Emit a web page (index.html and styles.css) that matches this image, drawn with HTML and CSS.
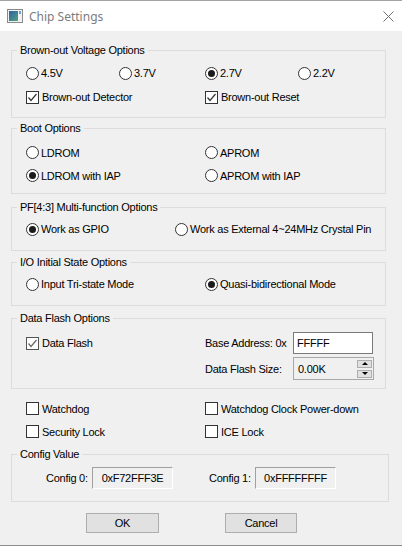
FILE: index.html
```html
<!DOCTYPE html>
<html lang="en">
<head>
  <meta charset="UTF-8">
  <title>Chip Settings</title>
  <link rel="stylesheet" href="styles.css">
</head>
<body>
  <div class="dialog">
    <!-- Barre de titre -->
    <div class="titlebar">
      <svg class="app-icon" width="16" height="14" viewBox="0 0 16 14">
        <defs>
          <linearGradient id="ico" x1="0" y1="0" x2="1" y2="1">
            <stop offset="0" stop-color="#2f5fa8"/>
            <stop offset="1" stop-color="#4fa57a"/>
          </linearGradient>
        </defs>
        <rect x="0.5" y="0.5" width="15" height="13" fill="#f2f2f2" stroke="#8a8a8a"/>
        <rect x="2" y="2" width="9" height="10" fill="url(#ico)"/>
        <rect x="12" y="2" width="2" height="3" fill="#6f9fd6"/>
      </svg>
      <span class="title">Chip Settings</span>
      <svg class="close" width="11" height="11" viewBox="0 0 11 11">
        <path d="M0.5 0.5 L10.5 10.5 M10.5 0.5 L0.5 10.5" stroke="#707070" stroke-width="1" fill="none"/>
      </svg>
    </div>

    <div class="content">
      <!-- Brown-out -->
      <fieldset class="group">
        <legend>Brown-out Voltage Options</legend>
        <div class="row cols4">
          <label class="opt"><span class="radio"></span>4.5V</label>
          <label class="opt"><span class="radio"></span>3.7V</label>
          <label class="opt"><span class="radio on"></span>2.7V</label>
          <label class="opt"><span class="radio"></span>2.2V</label>
        </div>
        <div class="row">
          <label class="opt"><span class="check"><svg width="11" height="11" viewBox="0 0 11 11"><path d="M1.5 5.5 L4 8.5 L9.5 2" /></svg></span>Brown-out Detector</label>
          <label class="opt"><span class="check"><svg width="11" height="11" viewBox="0 0 11 11"><path d="M1.5 5.5 L4 8.5 L9.5 2" /></svg></span>Brown-out Reset</label>
        </div>
      </fieldset>

      <!-- Boot -->
      <fieldset class="group boot">
        <legend>Boot Options</legend>
        <div class="row">
          <label class="opt"><span class="radio"></span>LDROM</label>
          <label class="opt"><span class="radio"></span>APROM</label>
        </div>
        <div class="row">
          <label class="opt"><span class="radio on"></span>LDROM with IAP</label>
          <label class="opt"><span class="radio"></span>APROM with IAP</label>
        </div>
      </fieldset>

      <!-- PF[4:3] -->
      <fieldset class="group pf">
        <legend>PF[4:3] Multi-function Options</legend>
        <div class="row pf-cols">
          <label class="opt"><span class="radio on"></span>Work as GPIO</label>
          <label class="opt"><span class="radio"></span>Work as External 4~24MHz Crystal Pin</label>
        </div>
      </fieldset>

      <!-- I/O -->
      <fieldset class="group io">
        <legend>I/O Initial State Options</legend>
        <div class="row">
          <label class="opt"><span class="radio"></span>Input Tri-state Mode</label>
          <label class="opt"><span class="radio on"></span>Quasi-bidirectional Mode</label>
        </div>
      </fieldset>

      <!-- Data Flash -->
      <fieldset class="group flash">
        <legend>Data Flash Options</legend>
        <div class="flash-grid">
          <label class="opt"><span class="check dim"><svg width="11" height="11" viewBox="0 0 11 11"><path d="M1.5 5.5 L4 8.5 L9.5 2" /></svg></span>Data Flash</label>
          <span>Base Address: 0x</span>
          <input class="field" type="text" value="FFFFF">
          <span></span>
          <span>Data Flash Size:</span>
          <div class="spin">
            <span>0.00K</span>
            <div class="spin-btns">
              <span class="spin-btn"><i class="tri-up"></i></span>
              <span class="spin-btn"><i class="tri-down"></i></span>
            </div>
          </div>
        </div>
      </fieldset>

      <!-- Options libres -->
      <div class="loose">
        <div class="row">
          <label class="opt"><span class="check"></span>Watchdog</label>
          <label class="opt"><span class="check"></span>Watchdog Clock Power-down</label>
        </div>
        <div class="row">
          <label class="opt"><span class="check"></span>Security Lock</label>
          <label class="opt"><span class="check"></span>ICE Lock</label>
        </div>
      </div>

      <!-- Config -->
      <fieldset class="group config">
        <legend>Config Value</legend>
        <div class="cfg-row">
          <div class="cfg"><span class="cfg-label">Config 0:</span><span class="cfg-value">0xF72FFF3E</span></div>
          <div class="cfg"><span class="cfg-label">Config 1:</span><span class="cfg-value">0xFFFFFFFF</span></div>
        </div>
      </fieldset>

      <div class="buttons">
        <button class="btn">OK</button>
        <button class="btn cancel">Cancel</button>
      </div>
    </div>
  </div>
</body>
</html>
```

FILE: styles.css
```css
* {
  box-sizing: border-box;
}
body {
  margin: 0;
  background: #f0f0f0;
  font-family: "Liberation Sans", Arial, sans-serif;
  font-size: 11px;
  letter-spacing: -0.25px;
  color: #000;
}
.dialog {
  width: 402px;
  height: 546px;
  display: flex;
  flex-direction: column;
  background: #f0f0f0;
  border-top: 1px solid #a3a3a3;
  border-bottom: 1px solid #8c8c8c;
}
.titlebar {
  height: 30px;
  flex: none;
  display: flex;
  align-items: center;
  padding: 0 8px 0 7px;
  background: #fff;
}
.app-icon {
  margin-top: -1px;
}
.title {
  margin-left: 6px;
  font-family: "Noto Sans", "Open Sans", sans-serif;
  font-size: 12px;
  letter-spacing: 0;
  color: #7c7c7c;
}
.close {
  margin-left: auto;
  margin-top: 1px;
}
.content {
  padding: 7px 16px 0 11px;
}

/* Group boxes */
.group {
  margin: 6px 0 0;
  padding: 4px 0 8px;
  border: 1px solid #dcdcdc;
  min-width: 0;
}
.group legend {
  margin-left: 5px;
  padding: 0 3px;
  line-height: 13px;
}
.row {
  display: grid;
  grid-template-columns: 179px 1fr;
  align-items: center;
  height: 24px;
  padding-left: 14px;
}
.cols4 {
  grid-template-columns: 93px 86px 93px 1fr;
}
.pf-cols {
  grid-template-columns: 149px 1fr;
}
.boot {
  margin-top: 4px;
  padding: 6px 0 6px;
}
.boot .row {
  height: 23px;
}
.pf {
  margin-top: 7px;
  padding: 3px 0 9px;
}
.io {
  margin-top: 5px;
  padding: 3px 0 9px;
}
.flash {
  margin-top: 6px;
  padding: 7px 0 8px;
}
.config {
  margin-top: 5px;
  margin-right: -3px;
  padding: 6px 0 12px;
}

/* Radios / cases */
.opt {
  display: flex;
  align-items: center;
  gap: 2px;
  white-space: nowrap;
}
.radio {
  width: 13px;
  height: 13px;
  flex: none;
  display: grid;
  place-items: center;
  border: 1px solid #333;
  border-radius: 50%;
  background: #fff;
}
.radio.on::after {
  content: "";
  width: 7px;
  height: 7px;
  border-radius: 50%;
  background: #1b1b1b;
}
.check {
  width: 13px;
  height: 13px;
  flex: none;
  margin-right: 1px;
  border: 1px solid #333;
  background: #fff;
}
.check svg {
  display: block;
}
.check path {
  fill: none;
  stroke: #333;
  stroke-width: 1.2;
}
.check.dim {
  border-color: #555;
}
.check.dim path {
  stroke: #666;
}

/* Data Flash */
.flash-grid {
  display: grid;
  grid-template-columns: 179px 88px 81px;
  grid-template-rows: 22px 23px;
  row-gap: 3px;
  align-items: center;
  padding-left: 14px;
}
.field {
  width: 80px;
  height: 22px;
  margin: 0;
  padding: 0 3px;
  border: 1px solid #7a7a7a;
  background: #fff;
  font: inherit;
  letter-spacing: inherit;
  color: #000;
}
.spin {
  height: 23px;
  display: flex;
  align-items: center;
  padding-left: 4px;
  border: 1px solid #a8a8a8;
  background: #f0f0f0;
}
.spin-btns {
  margin-left: auto;
  margin-right: 1px;
  display: flex;
  flex-direction: column;
  gap: 2px;
}
.spin-btn {
  width: 15px;
  height: 8px;
  display: grid;
  place-items: center;
  border: 1px solid #adadad;
  background: #e1e1e1;
}
.tri-up {
  border-left: 3px solid transparent;
  border-right: 3px solid transparent;
  border-bottom: 3px solid #000;
}
.tri-down {
  border-left: 3px solid transparent;
  border-right: 3px solid transparent;
  border-top: 3px solid #000;
}

/* Options hors groupe */
.loose {
  margin-top: 8px;
}
.loose .row {
  height: 23px;
  padding-left: 15px;
}

/* Config */
.cfg-row {
  display: grid;
  grid-template-columns: 163px 1fr;
  padding-left: 34px;
}
.cfg {
  display: flex;
  align-items: center;
}
.cfg-label {
  width: 46px;
}
.cfg-value {
  width: 81px;
  height: 22px;
  display: grid;
  place-items: center;
  border-top: 1px solid #a0a0a0;
  border-left: 1px solid #a0a0a0;
  border-right: 1px solid #fff;
  border-bottom: 1px solid #fff;
}

/* Boutons */
.buttons {
  display: flex;
  gap: 66px;
  margin-top: 11px;
  padding-left: 75px;
}
.btn {
  width: 73px;
  height: 20px;
  padding: 0;
  border: 1px solid #adadad;
  background: #e1e1e1;
  font: inherit;
  letter-spacing: inherit;
  color: #000;
}
.btn.cancel {
  width: 72px;
}
```
